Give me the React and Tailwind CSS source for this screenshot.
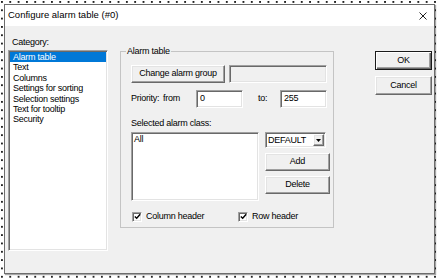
import React from "react";

const raised =
  "bg-[#f0f0f0] border border-t-white border-l-white border-r-[#696969] border-b-[#696969] shadow-[inset_-1px_-1px_0_#a0a0a0,inset_1px_1px_0_#e3e3e3]";
const sunken =
  "border border-t-[#a0a0a0] border-l-[#a0a0a0] border-r-white border-b-white shadow-[inset_1px_1px_0_#696969,inset_-1px_-1px_0_#e3e3e3]";

function Button({ children, className = "", isDefault = false }) {
  const look = isDefault
    ? "bg-[#f0f0f0] border border-[#1a1a1a] shadow-[inset_1px_1px_0_#fff,inset_-1px_-1px_0_#696969,inset_-2px_-2px_0_#a0a0a0]"
    : raised;
  return (
    <div className={`${look} flex items-center justify-center ${className}`}>
      <span>{children}</span>
    </div>
  );
}

function Field({ value = "", className = "", disabled = false }) {
  return (
    <div className={`${sunken} ${disabled ? "bg-[#f0f0f0]" : "bg-white"} pl-[3px] pt-[2px] leading-[11px] ${className}`}>
      {value}
    </div>
  );
}

function Check({ label }) {
  return (
    <div className="flex items-center gap-[4px]">
      <div className={`${sunken} bg-white w-[10px] h-[10px] flex items-center justify-center`}>
        <svg width="7" height="7" viewBox="0 0 7 7">
          <path d="M0.8 3.4 L2.7 5.3 L6.2 1.3" fill="none" stroke="#000" strokeWidth="1.4" />
        </svg>
      </div>
      <span className="leading-[11px]">{label}</span>
    </div>
  );
}

const categories = [
  "Alarm table",
  "Text",
  "Columns",
  "Settings for sorting",
  "Selection settings",
  "Text for tooltip",
  "Security",
];

export default function App() {
  return (
    <div className="w-[440px] h-[278px] overflow-hidden bg-white bg-[radial-gradient(circle_at_1px_1px,#222_0.9px,transparent_1px)] bg-[length:8.33px_8.33px] bg-[position:1px_1px] pt-[4px] pl-[4px] font-['Liberation_Sans',Arial,sans-serif] text-black">
      <div className="w-[431px] h-[270px] border border-[#6d6d6d] shadow-[1px_1px_1px_rgba(0,0,0,0.35)] flex flex-col">
        {/* title bar */}
        <div className="h-[21px] bg-white flex items-center justify-between pl-[3px] pr-[7px] text-[9.5px]">
          <span>Configure alarm table (#0)</span>
          <svg width="8" height="8" viewBox="0 0 8 8">
            <path d="M0.5 0.5 L7.5 7.5 M7.5 0.5 L0.5 7.5" stroke="#222" strokeWidth="1" />
          </svg>
        </div>

        <div className="flex-1 bg-[#f0f0f0] flex text-[9px] tracking-[-0.25px]">
          {/* category list */}
          <div className="ml-[3px] pt-[11px]">
            <div className="pl-[4px] h-[11px] leading-[11px]">Category:</div>
            <div className={`${sunken} bg-white mt-[2px] w-[100px] h-[201px] p-[1px]`}>
              {categories.map((c, i) => (
                <div
                  key={c}
                  className={`h-[10.4px] leading-[10.4px] pl-[3px] ${i === 0 ? "bg-[#0078d7] text-white" : ""}`}
                >
                  {c}
                </div>
              ))}
            </div>
          </div>

          {/* group box */}
          <fieldset className="ml-[12px] mt-[20px] w-[214px] h-[182px] border border-[#c4c4c4] pl-[10px]">
            <legend className="ml-[-5px] px-[1px] leading-[11px]">Alarm table</legend>

            <div className="mt-[8px] flex gap-[4px]">
              <Button className="w-[94px] h-[18px]">Change alarm group</Button>
              <Field disabled className="w-[98px] h-[18px]" />
            </div>

            <div className="mt-[7px] flex items-center h-[18px]">
              <span className="w-[32px] shrink-0">Priority:</span>
              <span className="w-[33px] shrink-0">from</span>
              <Field value="0" className="w-[47px] h-[18px] shrink-0" />
              <span className="ml-[15px] w-[22px] shrink-0">to:</span>
              <Field value="255" className="w-[47px] h-[18px] shrink-0" />
            </div>

            <div className="mt-[10px] h-[11px] leading-[11px]">Selected alarm class:</div>

            <div className="mt-[3px] flex">
              <div className={`${sunken} bg-white w-[128px] h-[69px] pl-[2px] pt-[1px] leading-[11px]`}>All</div>
              <div className="ml-[6px] flex flex-col">
                <div className={`${sunken} bg-white w-[61px] h-[16px] flex items-stretch`}>
                  <span className="flex-1 pl-[2px] leading-[14px]">DEFAULT</span>
                  <div className={`${raised} w-[11px] m-[1px] flex items-center justify-center`}>
                    <svg width="5" height="3" viewBox="0 0 5 3">
                      <path d="M0 0 L5 0 L2.5 3 Z" fill="#000" />
                    </svg>
                  </div>
                </div>
                <Button className="mt-[5px] w-[65px] h-[18px]">Add</Button>
                <Button className="mt-[5px] w-[65px] h-[18px]">Delete</Button>
              </div>
            </div>

            <div className="mt-[10px] flex">
              <div className="ml-[1px] w-[106px]">
                <Check label="Column header" />
              </div>
              <Check label="Row header" />
            </div>
          </fieldset>

          {/* dialog buttons */}
          <div className="ml-auto mr-[2px] mt-[25px] flex flex-col">
            <Button isDefault className="w-[57px] h-[19px]">OK</Button>
            <Button className="mt-[6px] w-[57px] h-[19px]">Cancel</Button>
          </div>
        </div>
      </div>
    </div>
  );
}
